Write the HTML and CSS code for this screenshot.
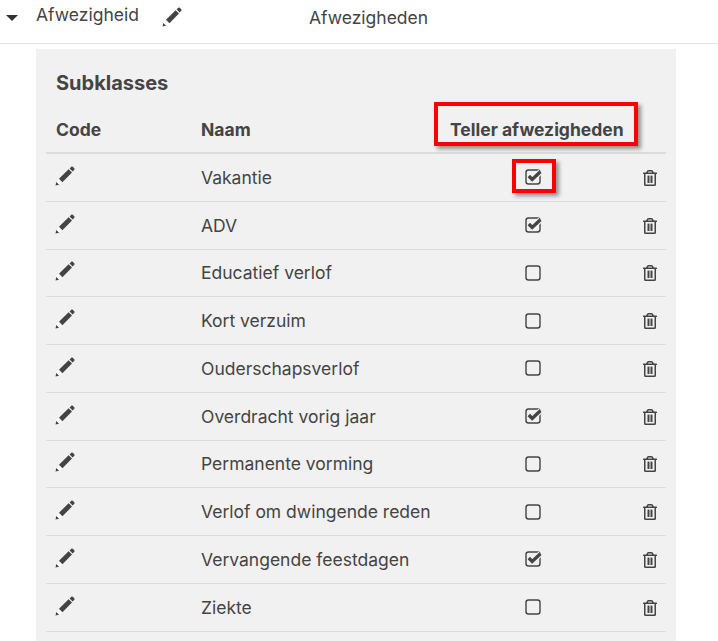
FILE: index.html
```html
<!DOCTYPE html>
<html lang="en">
<head>
    <meta charset="UTF-8">
    <title>Afwezigheid</title>
    <link rel="stylesheet" href="styles.css">
</head>
<body>
    <svg class="sprites" width="0" height="0">
        <symbol id="pencil" viewBox="0 0 20 20">
            <path d="M14.6 2.4l1.7-1.7c.4-.4 1-.4 1.4 0l1.6 1.6c.4.4.4 1 0 1.4l-1.7 1.7zM13.6 3.2l3.4 3.4-9.6 9.6-3.4-3.4z"/>
            <path d="M3.6 13.4l3.2 3.2-2.6 2.1-2.8-2.8z" fill="#fff"/>
            <path d="M1.3 15.9l2.8 2.8-3.6.9z"/>
        </symbol>
        <symbol id="trash" viewBox="0 0 448 512">
            <path d="M268 416h24a12 12 0 0 0 12-12V188a12 12 0 0 0-12-12h-24a12 12 0 0 0-12 12v216a12 12 0 0 0 12 12zM432 80h-82.41l-34-56.7A48 48 0 0 0 274.41 0H173.59a48 48 0 0 0-41.16 23.3L98.41 80H16A16 16 0 0 0 0 96v16a16 16 0 0 0 16 16h16v336a48 48 0 0 0 48 48h288a48 48 0 0 0 48-48V128h16a16 16 0 0 0 16-16V96a16 16 0 0 0-16-16zM171.84 50.91A6 6 0 0 1 177 48h94a6 6 0 0 1 5.15 2.91L293.61 80H154.39zM368 464H80V128h288zm-212-48h24a12 12 0 0 0 12-12V188a12 12 0 0 0-12-12h-24a12 12 0 0 0-12 12v216a12 12 0 0 0 12 12z"/>
            <rect x="208" y="176" width="32" height="240" rx="10"/>
        </symbol>
        <symbol id="unchecked" viewBox="0 0 18 18">
            <rect x="2" y="2" width="14" height="14" rx="2.5" fill="none" stroke="currentColor" stroke-width="1.4"/>
        </symbol>
        <symbol id="checked" viewBox="0 0 18 18">
            <rect x="2" y="2" width="14" height="14" rx="2.5" fill="none" stroke="currentColor" stroke-width="1.4"/>
            <path d="M4.8 8l3.4 3.4 8.2-7.6" fill="none" stroke="#f1f1f1" stroke-width="5.6"/>
            <path d="M4.8 8l3.4 3.4 8.2-7.6" fill="none" stroke="currentColor" stroke-width="3.4"/>
        </symbol>
    </svg>

    <div class="topbar">
        <span class="caret"></span>
        <span class="class-name">Afwezigheid</span>
        <svg class="icon-pencil-lg"><use href="#pencil"/></svg>
        <span class="class-label">Afwezigheden</span>
    </div>

    <div class="panel">
        <h2>Subklasses</h2>
        <table>
            <colgroup>
                <col class="col-code"><col class="col-name"><col class="col-count"><col class="col-del">
            </colgroup>
            <thead>
                <tr>
                    <th>Code</th>
                    <th>Naam</th>
                    <th class="th-count">Teller afwezigheden<span class="mark mark-head"></span></th>
                    <th></th>
                </tr>
            </thead>
            <tbody>
                <tr>
                    <td><svg class="icon-pencil"><use href="#pencil"/></svg></td>
                    <td>Vakantie</td>
                    <td class="td-count"><svg class="icon-box"><use href="#checked"/></svg><span class="mark mark-box"></span></td>
                    <td><svg class="icon-trash"><use href="#trash"/></svg></td>
                </tr>
                <tr>
                    <td><svg class="icon-pencil"><use href="#pencil"/></svg></td>
                    <td>ADV</td>
                    <td class="td-count"><svg class="icon-box"><use href="#checked"/></svg></td>
                    <td><svg class="icon-trash"><use href="#trash"/></svg></td>
                </tr>
                <tr>
                    <td><svg class="icon-pencil"><use href="#pencil"/></svg></td>
                    <td>Educatief verlof</td>
                    <td class="td-count"><svg class="icon-box"><use href="#unchecked"/></svg></td>
                    <td><svg class="icon-trash"><use href="#trash"/></svg></td>
                </tr>
                <tr>
                    <td><svg class="icon-pencil"><use href="#pencil"/></svg></td>
                    <td>Kort verzuim</td>
                    <td class="td-count"><svg class="icon-box"><use href="#unchecked"/></svg></td>
                    <td><svg class="icon-trash"><use href="#trash"/></svg></td>
                </tr>
                <tr>
                    <td><svg class="icon-pencil"><use href="#pencil"/></svg></td>
                    <td>Ouderschapsverlof</td>
                    <td class="td-count"><svg class="icon-box"><use href="#unchecked"/></svg></td>
                    <td><svg class="icon-trash"><use href="#trash"/></svg></td>
                </tr>
                <tr>
                    <td><svg class="icon-pencil"><use href="#pencil"/></svg></td>
                    <td>Overdracht vorig jaar</td>
                    <td class="td-count"><svg class="icon-box"><use href="#checked"/></svg></td>
                    <td><svg class="icon-trash"><use href="#trash"/></svg></td>
                </tr>
                <tr>
                    <td><svg class="icon-pencil"><use href="#pencil"/></svg></td>
                    <td>Permanente vorming</td>
                    <td class="td-count"><svg class="icon-box"><use href="#unchecked"/></svg></td>
                    <td><svg class="icon-trash"><use href="#trash"/></svg></td>
                </tr>
                <tr>
                    <td><svg class="icon-pencil"><use href="#pencil"/></svg></td>
                    <td>Verlof om dwingende reden</td>
                    <td class="td-count"><svg class="icon-box"><use href="#unchecked"/></svg></td>
                    <td><svg class="icon-trash"><use href="#trash"/></svg></td>
                </tr>
                <tr>
                    <td><svg class="icon-pencil"><use href="#pencil"/></svg></td>
                    <td>Vervangende feestdagen</td>
                    <td class="td-count"><svg class="icon-box"><use href="#checked"/></svg></td>
                    <td><svg class="icon-trash"><use href="#trash"/></svg></td>
                </tr>
                <tr>
                    <td><svg class="icon-pencil"><use href="#pencil"/></svg></td>
                    <td>Ziekte</td>
                    <td class="td-count"><svg class="icon-box"><use href="#unchecked"/></svg></td>
                    <td><svg class="icon-trash"><use href="#trash"/></svg></td>
                </tr>
            </tbody>
        </table>
    </div>
</body>
</html>
```

FILE: styles.css
```css
html, body {
    height: 100%;
    overflow: hidden;
}
body {
    font-family: 'Inter', sans-serif;
    font-size: 17.5px;
    margin: 0;
    padding: 0;
    background: white;
    color: #444;
    display: flex;
    flex-direction: column;
}
.sprites {
    position: absolute;
}
.topbar {
    display: flex;
    align-items: flex-start;
    height: 43px;
    flex: none;
    border-bottom: 1px solid #e2e2e2;
}
.caret {
    width: 0;
    height: 0;
    margin: 15px 18px 0 6px;
    border-left: 6px solid transparent;
    border-right: 6px solid transparent;
    border-top: 6px solid #333;
}
.class-name {
    margin-top: 5px;
    line-height: 20px;
}
.icon-pencil-lg {
    width: 20px;
    height: 20px;
    margin: 7px 0 0 23px;
    fill: #444;
}
.class-label {
    margin: 8px 0 0 127px;
    line-height: 20px;
}
.panel {
    position: relative;
    flex: 1;
    box-sizing: border-box;
    margin: 5px 42px 0 36px;
    padding: 23px 10px 0;
    background: #f1f1f1;
}
h2 {
    margin: 0 0 0 10px;
    font-size: 20px;
    font-weight: 700;
    line-height: 22px;
}
table {
    width: 620px;
    margin-top: 14px;
    border-collapse: collapse;
    table-layout: fixed;
}
.col-code { width: 145px; }
.col-name { width: 249px; }
.col-count { width: 193px; }
.col-del { width: 33px; }
th {
    height: 43px;
    padding: 0 0 1px 10px;
    font-weight: 700;
    text-align: left;
    border-bottom: 2px solid #dcdcdc;
}
td {
    height: 46.75px;
    padding: 0 0 0 10px;
    border-bottom: 1px solid #dcdcdc;
}
td svg {
    display: block;
}
.th-count, .td-count {
    position: relative;
}
.td-count {
    padding-left: 84px;
}
.icon-pencil {
    width: 20px;
    height: 20px;
    margin: -3px 0 0 -1px;
    fill: #444;
}
.icon-box {
    width: 18px;
    height: 18px;
    color: #444;
}
.icon-trash {
    width: 14px;
    height: 16px;
    margin-top: 1px;
    fill: #444;
}
.mark {
    position: absolute;
    box-sizing: border-box;
    border: 4px solid #f00;
    box-shadow: 3px 3px 4px rgba(0, 0, 0, 0.4);
}
.mark-head {
    left: -6px;
    top: -6px;
    width: 204px;
    height: 44px;
}
.mark-box {
    left: 72px;
    top: 5px;
    width: 44px;
    height: 34px;
}
```
